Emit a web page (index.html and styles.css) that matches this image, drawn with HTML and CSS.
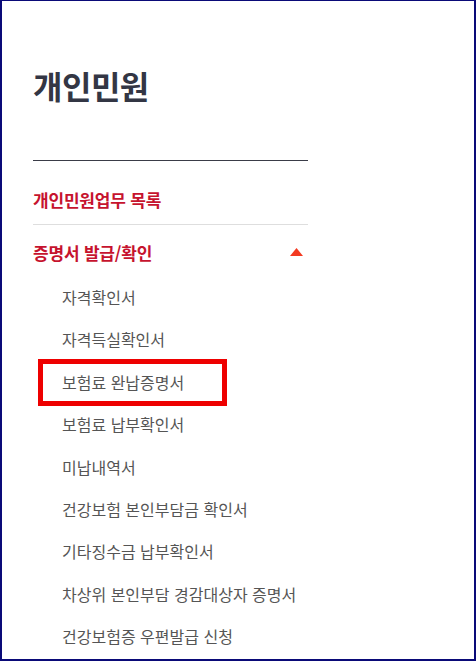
FILE: index.html
```html
<!DOCTYPE html>
<html lang="ko">
<head>
<meta charset="utf-8">
<link rel="stylesheet" href="styles.css">
</head>
<body>
<div class="page">
  <h1 class="title">개인민원</h1>
  <nav class="lnb">
    <div class="depth1 first">개인민원업무 목록</div>
    <div class="depth1 open">
      <span>증명서 발급/확인</span>
      <svg class="arrow" width="13" height="8" viewBox="0 0 13 8"><polygon points="6.5,0 13,8 0,8" fill="#f33a21"/></svg>
    </div>
    <ul class="sub">
      <li>자격확인서</li>
      <li>자격득실확인서</li>
      <li class="marked">보험료 완납증명서<span class="highlight"></span></li>
      <li>보험료 납부확인서</li>
      <li>미납내역서</li>
      <li>건강보험 본인부담금 확인서</li>
      <li>기타징수금 납부확인서</li>
      <li>차상위 본인부담 경감대상자 증명서</li>
      <li>건강보험증 우편발급 신청</li>
    </ul>
  </nav>
</div>
</body>
</html>
```
FILE: styles.css
```css
html, body {
  margin: 0;
  padding: 0;
  background: #fff;
}
.page {
  box-sizing: border-box;
  width: 476px;
  height: 661px;
  border: 2px solid #0a0a78;
  border-top-width: 1px;
  padding-left: 31px;
  overflow: hidden;
  font-family: "Noto Sans CJK KR", "Noto Sans", sans-serif;
}
.title {
  margin: 62px 0 0;
  font-size: 32px;
  line-height: 44px;
  font-weight: 700;
  color: #333644;
  letter-spacing: -0.5px;
}
.lnb {
  width: 275px;
  margin-top: 53px;
  border-top: 1px solid #3a3c48;
}
.depth1 {
  font-size: 17px;
  line-height: 24px;
  font-weight: 700;
  color: #c6132e;
  letter-spacing: -0.2px;
}
.depth1.first {
  padding: 27px 0 12px;
  border-bottom: 1px solid #dedede;
}
.depth1.open {
  display: flex;
  justify-content: space-between;
  align-items: center;
  padding: 16px 5px 0 0;
}
.arrow {
  display: block;
  margin-top: -3px;
}
.sub {
  list-style: none;
  margin: 11px 0 0;
  padding: 0 0 0 29px;
}
.sub li {
  position: relative;
  font-size: 16px;
  line-height: 24.4px;
  padding: 9px 0;
  color: #555;
  letter-spacing: 0;
}
.highlight {
  position: absolute;
  left: -24px;
  top: -2px;
  width: 189px;
  height: 47px;
  box-sizing: border-box;
  border: 5px solid #ee0000;
}
```
